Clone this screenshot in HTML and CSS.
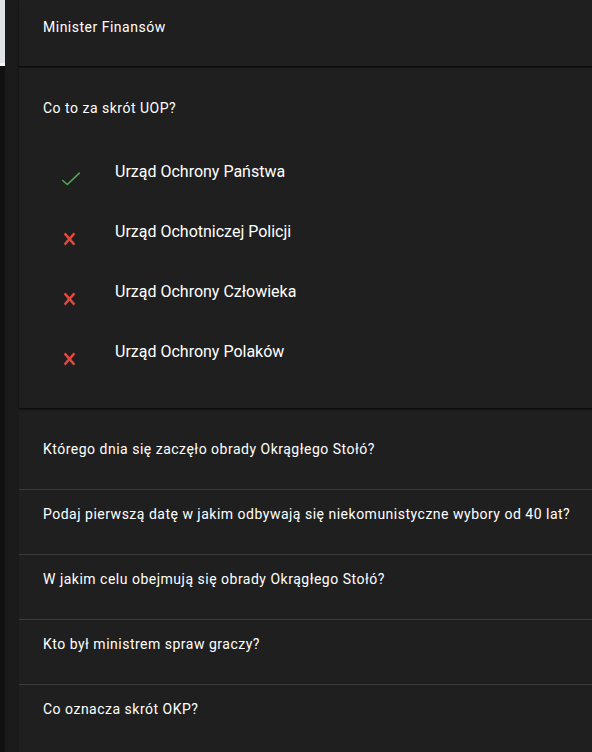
FILE: index.html
```html
<!DOCTYPE html>
<html lang="pl">
<head>
<meta charset="utf-8">
<title>Quiz</title>
<link rel="stylesheet" href="styles.css">
</head>
<body>
<div class="page">
  <div class="edge">
    <div class="edge-top"></div>
  </div>
  <div class="gutter"></div>
  <main class="main">
    <section class="card card-collapsed">
      <div class="q-title">Minister Finansów</div>
    </section>
    <section class="card card-expanded">
      <div class="q-title">Co to za skrót UOP?</div>
      <ul class="options">
        <li class="option">
          <svg class="icon" viewBox="0 0 20 20" width="20" height="20"><path d="M1.7 11.5 L6.3 15.5 L18.3 4.2" fill="none" stroke="#56a456" stroke-width="1.6" stroke-linecap="round" stroke-linejoin="round"/></svg>
          <span class="opt-text">Urząd Ochrony Państwa</span>
        </li>
        <li class="option">
          <svg class="icon" viewBox="0 0 20 20" width="20" height="20"><path d="M3.6 4.4 L13.4 15.6 M13.4 4.4 L3.6 15.6" fill="none" stroke="#e2483d" stroke-width="2.4"/></svg>
          <span class="opt-text">Urząd Ochotniczej Policji</span>
        </li>
        <li class="option">
          <svg class="icon" viewBox="0 0 20 20" width="20" height="20"><path d="M3.6 4.4 L13.4 15.6 M13.4 4.4 L3.6 15.6" fill="none" stroke="#e2483d" stroke-width="2.4"/></svg>
          <span class="opt-text">Urząd Ochrony Człowieka</span>
        </li>
        <li class="option">
          <svg class="icon" viewBox="0 0 20 20" width="20" height="20"><path d="M3.6 4.4 L13.4 15.6 M13.4 4.4 L3.6 15.6" fill="none" stroke="#e2483d" stroke-width="2.4"/></svg>
          <span class="opt-text">Urząd Ochrony Polaków</span>
        </li>
      </ul>
    </section>
    <section class="list">
      <div class="row">Którego dnia się zaczęło obrady Okrągłego Stołó?</div>
      <div class="row">Podaj pierwszą datę w jakim odbywają się niekomunistyczne wybory od 40 lat?</div>
      <div class="row">W jakim celu obejmują się obrady Okrągłego Stołó?</div>
      <div class="row">Kto był ministrem spraw graczy?</div>
      <div class="row">Co oznacza skrót OKP?</div>
    </section>
  </main>
</div>
</body>
</html>
```
FILE: styles.css
```css
* { box-sizing: border-box; }
html, body {
  margin: 0;
  padding: 0;
  background: #121212;
}
body {
  font-family: Roboto, "Noto Sans", "Liberation Sans", sans-serif;
  color: #ffffff;
  width: 592px;
  height: 752px;
  overflow: hidden;
}
.page {
  display: flex;
  height: 752px;
}
.edge {
  width: 5px;
  flex: none;
  background: #111111;
}
.edge-top {
  height: 66px;
  background: #e0e2e5;
  border-bottom: 3px solid #f4f5f6;
}
.gutter {
  width: 14px;
  flex: none;
  background: #1b1b1b;
}
.main {
  flex: 1;
  display: flex;
  flex-direction: column;
  background: #1b1b1b;
}
.card {
  background: #1f1f1f;
  box-shadow: 0 1px 2px rgba(0, 0, 0, 0.7);
  position: relative;
}
.q-title {
  font-size: 14px;
  line-height: 20px;
  letter-spacing: 0.5px;
  padding-left: 24px;
}
.card-collapsed {
  height: 66px;
  padding-top: 17px;
}
.card-expanded {
  margin-top: 2px;
  height: 340px;
  padding-top: 30px;
}
.options {
  list-style: none;
  margin: 24px 0 0;
  padding: 0;
}
.option {
  height: 60px;
  display: flex;
  align-items: center;
  padding-left: 42px;
}
.icon {
  flex: none;
  margin-top: 13px;
  margin-right: 34px;
}
.opt-text {
  font-size: 16px;
  line-height: 24px;
}
.list {
  margin-top: 2px;
  flex: 1;
  background: #1f1f1f;
  padding-top: 15px;
}
.row {
  font-size: 14px;
  line-height: 20px;
  letter-spacing: 0.5px;
  padding: 14px 24px 30px;
  height: 65px;
  border-top: 1px solid #3b3b3b;
  white-space: nowrap;
}
.row:first-child {
  border-top: none;
  height: 64px;
}
```
